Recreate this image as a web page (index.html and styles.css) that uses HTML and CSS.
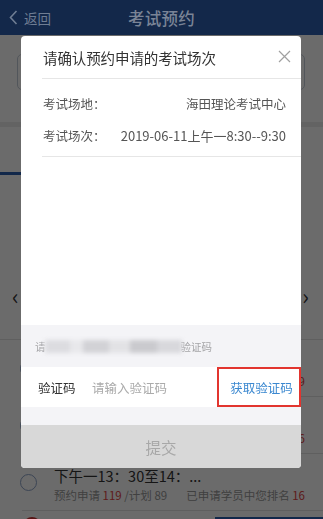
FILE: index.html
```html
<!DOCTYPE html>
<html lang="zh-CN">
<head>
<meta charset="utf-8">
<title>考试预约</title>
<link rel="stylesheet" href="styles.css">
</head>
<body>
<header class="nav">
  <div class="back">
    <svg class="back-ico" width="9" height="15" viewBox="0 0 9 15"><polyline points="7.5,1 1.5,7.5 7.5,14" fill="none" stroke="#6f7d93" stroke-width="1.6"/></svg>
    <span>返回</span>
  </div>
  <div class="nav-title">考试预约</div>
  <div></div>
</header>

<main class="page">
  <section class="filter"><div class="picker">海田理论考试中心</div></section>
  <div class="sep"></div>
  <nav class="tabs">
    <span class="tab active">科目一</span>
    <span class="tab">科目二</span>
    <span class="tab">科目三</span>
  </nav>
  <section class="dates">
    <div class="date-row">
      <span class="chev">‹</span>
      <span class="date-text">2019-06-11 星期二</span>
      <span class="chev">›</span>
    </div>
  </section>
  <ul class="list">
    <li class="row">
      <span class="radio"></span>
      <div class="row-body">
        <div class="row-title">上午一8：30至9：30</div>
        <div class="row-info"><span>预约申请 <b>102</b> /计划 89</span><span>已申请学员中您排名 <b>29</b></span></div>
      </div>
    </li>
    <li class="row">
      <span class="radio"></span>
      <div class="row-body">
        <div class="row-title">上午二10：00至11：...</div>
        <div class="row-info"><span>预约申请 <b>96</b> /计划 89</span><span>已申请学员中您排名 <b>36</b></span></div>
      </div>
    </li>
    <li class="row">
      <span class="radio"></span>
      <div class="row-body">
        <div class="row-title">下午一13：30至14：...</div>
        <div class="row-info"><span>预约申请 <b>119</b> /计划 89</span><span>已申请学员中您排名 <b>16</b></span></div>
      </div>
    </li>
  </ul>
  <div class="footer">
    <span class="dot"></span>
    <span class="footer-btn"></span>
  </div>
</main>

<div class="mask"></div>

<div class="modal">
  <div class="m-head">
    <span class="m-title">请确认预约申请的考试场次</span>
    <svg class="m-close" width="13" height="13" viewBox="0 0 13 13"><path d="M1 1L12 12M12 1L1 12" stroke="#a0a0a0" stroke-width="1.2" fill="none"/></svg>
  </div>
  <div class="m-info">
    <div class="m-row"><span>考试场地：</span><span>海田理论考试中心</span></div>
    <div class="m-row"><span>考试场次：</span><span class="m-val">2019-06-11上午一8:30--9:30</span></div>
  </div>
  <div class="m-spacer"></div>
  <div class="m-verify">
    <div class="m-notice">请<span class="blur"></span>验证码</div>
    <div class="m-code">
      <span class="m-code-label">验证码</span>
      <span class="m-code-input">请输入验证码</span>
      <span class="m-code-btn">获取验证码</span>
    </div>
  </div>
  <div class="m-submit">提交</div>
</div>
</body>
</html>
```

FILE: styles.css
```css
* { box-sizing: border-box; }
html, body {
  margin: 0;
  padding: 0;
  width: 323px;
  height: 519px;
  overflow: hidden;
  background: #fff;
  font-family: "Noto Sans CJK SC", "Noto Sans", sans-serif;
}

.nav {
  position: relative;
  z-index: 3;
  height: 35px;
  background: #13284a;
  display: grid;
  grid-template-columns: 1fr auto 1fr;
  align-items: center;
}
.back {
  display: flex;
  align-items: center;
  padding-left: 9px;
  color: #6f7d93;
  font-size: 13.5px;
  gap: 6px;
}
.back-ico { display: block; }
.nav-title {
  color: #7a8496;
  font-size: 16.5px;
  font-weight: 500;
  letter-spacing: 0.3px;
}

.page { background: #fff; }
.filter {
  height: 87px;
  padding: 19px 18px 0 17px;
}
.picker {
  height: 36px;
  border: 1px solid #c4ccd8;
  border-radius: 5px;
  font-size: 13px;
  color: #333;
  display: flex;
  align-items: center;
  justify-content: center;
}
.sep { height: 5px; background: #ececec; }
.tabs {
  height: 48px;
  display: flex;
}
.tab {
  width: 108px;
  display: flex;
  align-items: center;
  justify-content: center;
  font-size: 14px;
  color: #333;
  border-bottom: 3px solid transparent;
}
.tab.active { border-bottom-color: #2d5fb0; color: #2d5fb0; }
.dates {
  height: 165px;
  padding-top: 108px;
  border-bottom: 1px solid #e2e2e2;
}
.date-row {
  height: 24px;
  display: flex;
  align-items: center;
  justify-content: space-between;
  padding: 0 14px 0 12px;
}
.chev { font-size: 22px; color: #333; line-height: 24px; }
.date-text { font-size: 14px; color: #333; }

.list { list-style: none; margin: 0; padding: 0; }
.row {
  height: 57px;
  margin-left: 22px;
  border-bottom: 1px solid #e2e2e2;
  display: flex;
  align-items: flex-start;
  padding-top: 12px;
}
.radio {
  align-self: center;
  margin-left: -2px;
  margin-top: -12px;
  width: 17px;
  height: 17px;
  border: 1.5px solid #8ea4c8;
  border-radius: 50%;
  flex: none;
}
.row-body {
  flex: 1;
  min-width: 0;
  margin-left: 17px;
  padding-right: 18px;
}
.row-title {
  font-size: 14.5px;
  line-height: 20px;
  color: #333;
  white-space: nowrap;
}
.row-info {
  display: flex;
  justify-content: space-between;
  font-size: 11.5px;
  line-height: 18px;
  color: #999;
  white-space: nowrap;
}
.row-info b { font-weight: 400; color: #e04545; }

.footer {
  height: 60px;
  display: flex;
  align-items: flex-start;
  justify-content: space-between;
  padding-top: 6px;
}
.dot {
  margin-left: 23px;
  width: 18px;
  height: 18px;
  border-radius: 50%;
  background: #d03030;
}
.footer-btn {
  width: 108px;
  height: 50px;
  background: #2d5fb0;
}

.mask {
  position: fixed;
  left: 0; right: 0; top: 35px; bottom: 0;
  background: rgba(0, 0, 0, 0.58);
  z-index: 1;
}

.modal {
  position: fixed;
  left: 21px;
  top: 36px;
  width: 280px;
  height: 432px;
  z-index: 2;
  background: #fff;
  border-radius: 4px;
  overflow: hidden;
  display: flex;
  flex-direction: column;
}
.m-head {
  height: 43px;
  margin-left: 21px;
  padding: 0 10px 0 1px;
  border-bottom: 1px solid #e6e6e6;
  display: flex;
  align-items: center;
  justify-content: space-between;
  flex: none;
}
.m-title { font-size: 14.5px; color: #333; letter-spacing: -0.1px; }
.m-close { display: block; margin-top: -2px; }
.m-info {
  margin-left: 21px;
  padding: 8px 15px 5px 1px;
  border-bottom: 1px solid #e6e6e6;
  flex: none;
}
.m-row {
  height: 32px;
  display: flex;
  align-items: center;
  justify-content: space-between;
  font-size: 12.5px;
  color: #555;
}
.m-val { font-size: 13px; }
.m-spacer { flex: 1; }
.m-verify {
  background: #f4f4f7;
  padding-bottom: 18px;
  flex: none;
}
.m-notice {
  height: 42px;
  padding-left: 14px;
  display: flex;
  align-items: center;
  font-size: 10.5px;
  color: #a5a5a8;
}
.blur {
  display: inline-block;
  width: 137px;
  height: 13px;
  margin: 0 -1px;
  background: linear-gradient(90deg, #dcdce0 0 18%, #e8e8eb 18% 28%, #d2d2d6 28% 47%, #e2e2e5 47% 62%, #cacace 62% 82%, #d8d8dc 82%);
  filter: blur(2px);
}
.m-code {
  height: 40px;
  background: #fff;
  display: flex;
  align-items: center;
  padding-left: 17px;
  font-size: 12.5px;
}
.m-code-label { color: #333; width: 54px; }
.m-code-input { color: #ababab; flex: 1; }
.m-code-btn {
  width: 84px;
  height: 40px;
  border: 2px solid #e2352f;
  color: #3b88d0;
  display: flex;
  align-items: center;
  justify-content: center;
  padding-left: 5px;
}
.m-submit {
  height: 43px;
  background: #d8d8d8;
  color: #a8a8a8;
  font-size: 15.5px;
  display: flex;
  align-items: center;
  justify-content: center;
  flex: none;
}
```
